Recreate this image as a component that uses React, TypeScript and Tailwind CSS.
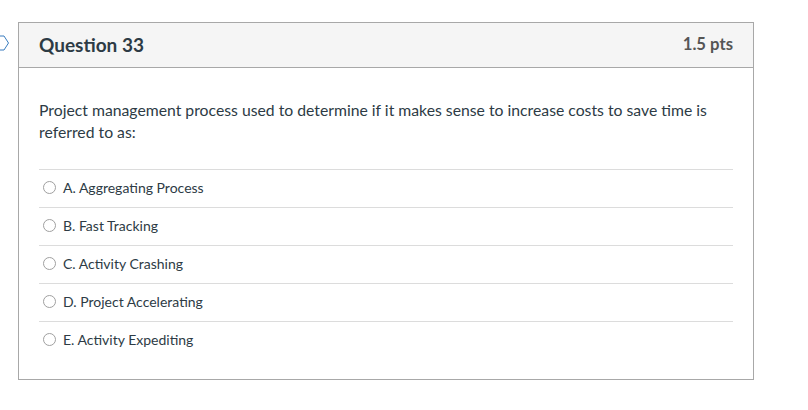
const options = [
  "A. Aggregating Process",
  "B. Fast Tracking",
  "C. Activity Crashing",
  "D. Project Accelerating",
  "E. Activity Expediting",
];

export default function App() {
  return (
    <div className="relative w-[808px] h-[410px] bg-white pl-[18px] pt-[22px] font-['Lato','Liberation_Sans',sans-serif]">
      <svg className="absolute left-0 top-[35px]" width="10" height="16" viewBox="0 0 10 16">
        <polygon points="-4,1 4,1 8.5,8 4,15 -4,15" fill="none" stroke="#3a7dbf" strokeWidth="1" />
      </svg>
      <div className="w-[736px] border border-[#a8a8a8]">
        <div className="h-[45px] bg-[#f5f5f5] border-b border-[#a8a8a8] flex items-center justify-between px-5">
          <h2 className="text-[19px] font-bold text-[#2d3b45]">Question 33</h2>
          <span className="text-[16.7px] font-bold text-[#555]">1.5 pts</span>
        </div>
        <div className="px-5 pt-[31px] pb-[20px]">
          <p className="text-[15.75px] leading-[22px] text-[#2d3b45]">
            Project management process used to determine if it makes sense to increase costs to save time is referred to as:
          </p>
          <div className="mt-[26px]">
            {options.map((o) => (
              <label key={o} className="h-[38px] border-t border-[#dcdcdc] flex items-center gap-[7px] pl-1 pb-[3px] text-[14px] text-[#2d3b45]">
                <span className="w-[13px] h-[13px] rounded-full border border-[#a0a0a0] bg-white" />
                {o}
              </label>
            ))}
          </div>
        </div>
      </div>
    </div>
  );
}
